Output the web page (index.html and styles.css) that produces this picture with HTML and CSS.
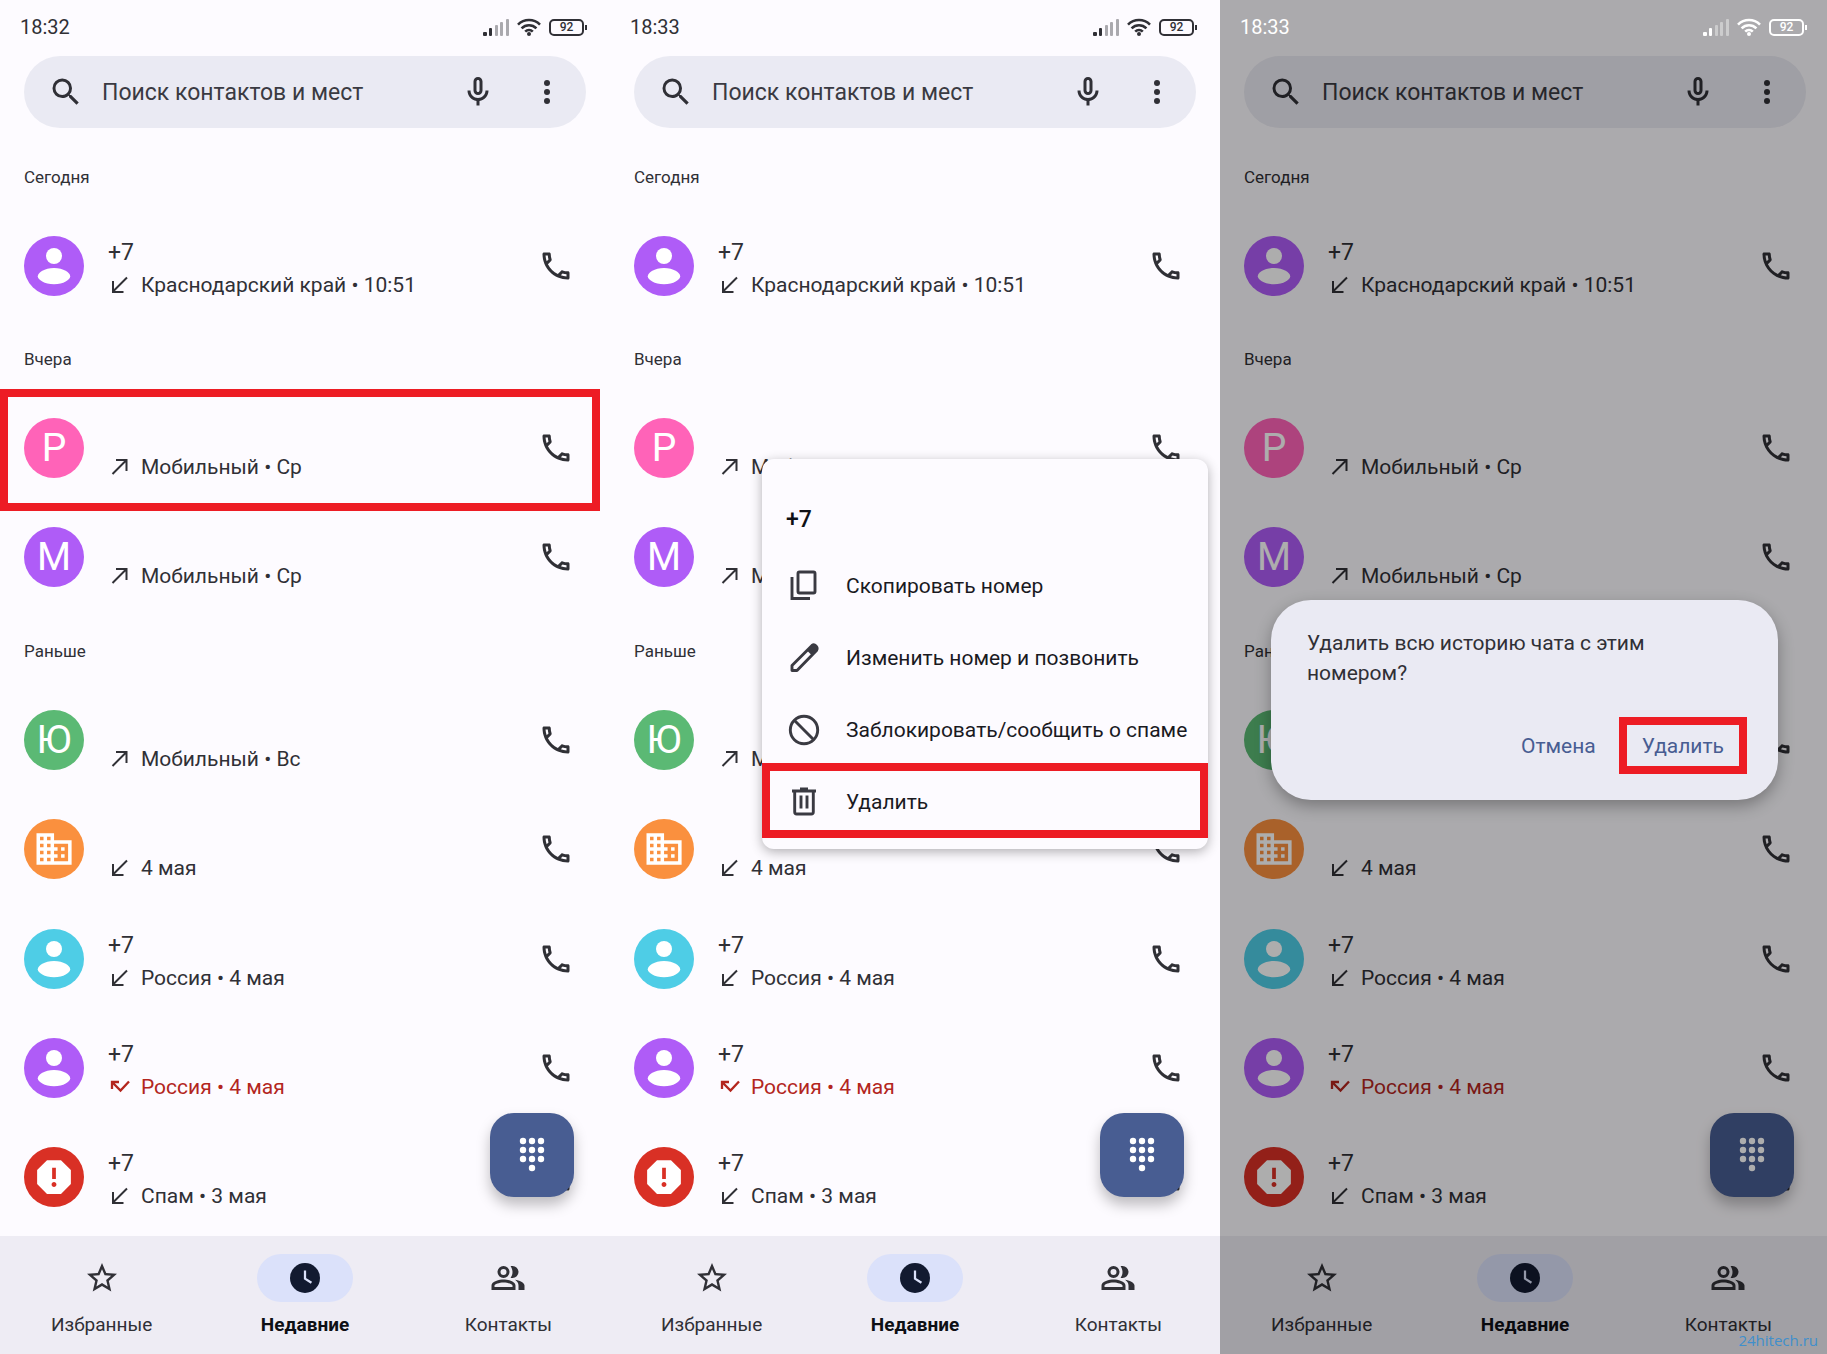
FILE: index.html
```
<!DOCTYPE html>
<html lang="ru">
<head>
  <meta charset="UTF-8" />
  <meta name="viewport" content="width=device-width, initial-scale=1.0"/>
  <title>Телефон - Недавние</title>
  <link rel="stylesheet" href="styles.css">
</head>
<body>

  <!-- ICONS -->
  <svg class="sprite" aria-hidden="true">
    <symbol id="i-signal" viewBox="0 0 26 17">
      <rect x="0" y="13" width="4" height="4" rx="1"/>
      <rect x="6" y="9" width="3" height="8" rx="1"/>
      <g opacity=".4"><rect x="12" y="6" width="3" height="11" rx="1"/><rect x="17" y="3" width="3" height="14" rx="1"/><rect x="23" y="0" width="3" height="17" rx="1"/></g>
    </symbol>
    <symbol id="i-wifi" viewBox="0 0 24 18">
      <g fill="none" stroke="currentColor" stroke-width="2.6"><path d="M1 6.6a15.600 15.600 0 0 1 22 0"/><path d="M4.600 10.300a10.500 10.500 0 0 1 14.800 0"/><path d="M8.200 13.700a5.400 5.400 0 0 1 7.600 0"/></g>
      <circle cx="12" cy="16" r="2"/>
    </symbol>
    <symbol id="i-search" viewBox="0 0 24 24"><path d="M15.500 14h-.79l-.28-.27A6.471 6.471 0 0 0 16 9.500 6.500 6.500 0 1 0 9.500 16c1.610 0 3.090-.59 4.230-1.570l.27.28v.79l5 4.990L20.490 19l-4.990-5zm-6 0C7.010 14 5 11.990 5 9.500S7.010 5 9.500 5 14 7.010 14 9.500 11.990 14 9.500 14z"/></symbol>
    <symbol id="i-mic" viewBox="0 0 24 24"><path d="M12 14c1.660 0 3-1.340 3-3V5c0-1.660-1.340-3-3-3S9 3.340 9 5v6c0 1.660 1.340 3 3 3zm-1-9c0-.55.45-1 1-1s1 .45 1 1v6c0 .55-.45 1-1 1s-1-.45-1-1V5zm6 6c0 2.760-2.240 5-5 5s-5-2.240-5-5H5c0 3.530 2.610 6.430 6 6.920V21h2v-3.080c3.390-.49 6-3.390 6-6.920h-2z"/></symbol>
    <symbol id="i-more" viewBox="0 0 24 24"><circle cx="12" cy="6" r="2"/><circle cx="12" cy="12" r="2"/><circle cx="12" cy="18" r="2"/></symbol>
    <symbol id="i-call" viewBox="0 0 24 24"><path d="M6.540 5c.06.89.21 1.760.45 2.590l-1.200 1.200c-.41-1.200-.67-2.470-.76-3.790h1.510m9.860 12.020c.85.24 1.720.39 2.600.45v1.490c-1.320-.09-2.590-.35-3.800-.75l1.200-1.190M7.500 3H4c-.55 0-1 .45-1 1 0 9.390 7.610 17 17 17 .55 0 1-.45 1-1v-3.490c0-.55-.45-1-1-1-1.240 0-2.450-.2-3.570-.57-.1-.04-.21-.05-.31-.05-.26 0-.51.1-.71.29l-2.200 2.200c-2.830-1.450-5.150-3.760-6.590-6.590l2.200-2.200c.28-.28.36-.67.25-1.020C8.700 6.450 8.500 5.250 8.500 4c0-.55-.45-1-1-1z"/></symbol>
    <symbol id="i-in" viewBox="0 0 24 24"><path fill="none" stroke="currentColor" stroke-width="2" d="M19 4.500L5 18.500M5 8v11H15.500"/></symbol>
    <symbol id="i-out" viewBox="0 0 24 24"><path fill="none" stroke="currentColor" stroke-width="2" d="M4.500 19L18.500 5M8 5h10.500v11"/></symbol>
    <symbol id="i-missed" viewBox="0 0 24 24"><path fill="none" stroke="currentColor" stroke-width="2.300" d="M4 14V7h7M4.500 7.500l8 8 8.500-9"/></symbol>
    <symbol id="i-person" viewBox="0 0 60 60"><circle cx="30" cy="20" r="8"/><path d="M30 32c9.500 0 16.200 4.600 16.200 8.200S39.500 48.200 30 48.200 13.800 43.800 13.800 40.200 20.500 32 30 32z"/></symbol>
    <symbol id="i-company" viewBox="-8 -8 40 40"><path d="M12 7V3H2v18h20V7H12zM6 19H4v-2h2v2zm0-4H4v-2h2v2zm0-4H4V9h2v2zm0-4H4V5h2v2zm4 12H8v-2h2v2zm0-4H8v-2h2v2zm0-4H8V9h2v2zm0-4H8V5h2v2zm10 12h-8v-2h2v-2h-2v-2h2v-2h-2V9h8v10zm-2-8h-2v2h2v-2zm0 4h-2v2h2v-2z" transform="translate(-2 -2) scale(1.170)"/></symbol>
    <symbol id="i-spam" viewBox="-4 -4 32 32"><path d="M15.730 3H8.270L3 8.270v7.460L8.270 21h7.460L21 15.730V8.270L15.730 3zM12 17.300c-.72 0-1.300-.58-1.300-1.300 0-.72.58-1.300 1.300-1.300.72 0 1.300.58 1.300 1.300 0 .72-.58 1.300-1.300 1.300zm1-4.300h-2V7h2v6z"/></symbol>
    <symbol id="i-dialpad" viewBox="0 0 26 36"><circle cx="4" cy="4" r="3.200"/><circle cx="13" cy="4" r="3.200"/><circle cx="22" cy="4" r="3.200"/><circle cx="4" cy="13" r="3.200"/><circle cx="13" cy="13" r="3.200"/><circle cx="22" cy="13" r="3.200"/><circle cx="4" cy="22" r="3.200"/><circle cx="13" cy="22" r="3.200"/><circle cx="22" cy="22" r="3.200"/><circle cx="13" cy="31" r="3.200"/></symbol>
    <symbol id="i-star" viewBox="0 0 24 24"><path d="M22 9.240l-7.190-.62L12 2 9.190 8.630 2 9.240l5.460 4.730L5.820 21 12 17.270 18.180 21l-1.630-7.030L22 9.240zM12 15.400l-3.760 2.270 1-4.280-3.320-2.880 4.380-.38L12 6.100l1.710 4.040 4.380.38-3.320 2.880 1 4.280L12 15.400z"/></symbol>
    <symbol id="i-clock" viewBox="0 0 24 24"><circle cx="12" cy="12" r="10"/><path class="hands" d="M12 7v5.400l4.300 2.800"/></symbol>
    <symbol id="i-people" viewBox="0 0 24 24"><path d="M9 12a4 4 0 1 0 0-8 4 4 0 0 0 0 8zm0-6a2 2 0 1 1 0 4 2 2 0 0 1 0-4zM9 13c-2.700 0-8 1.300-8 4v3h16v-3c0-2.700-5.300-4-8-4zm6 5H3v-1c0-.7 3.100-2 6-2s6 1.300 6 2v1zM13.700 4.100c.8 1 1.300 2.400 1.300 3.900s-.5 2.900-1.300 3.900c.4.1.9.1 1.300.1a4 4 0 0 0 0-8c-.4 0-.9 0-1.300.1zM16.700 13.100c1.400 1 2.300 2.200 2.300 3.900v3h4v-3c0-2.200-3.500-3.500-6.300-3.900z"/></symbol>
    <symbol id="i-copy" viewBox="0 0 36 36"><g fill="none" stroke="currentColor" stroke-width="2.900"><rect x="12" y="4" width="17" height="21" rx="1.500"/><path d="M6 9v21.500h18"/></g></symbol>
    <symbol id="i-edit" viewBox="0 0 36 36"><path fill="none" stroke="currentColor" stroke-width="2.900" stroke-linejoin="round" d="M6 30.500v-5L26 5.500q2-1.500 4 .5t.5 4.500L11 30.500z"/><path d="M21 10.500L26 5.500q2-1.500 4 .5t.5 4.500l-4.500 5z"/></symbol>
    <symbol id="i-block" viewBox="0 0 36 36"><g fill="none" stroke="currentColor" stroke-width="2.900"><circle cx="18" cy="18" r="13.700"/><path d="M8.300 8.300l19.400 19.400"/></g></symbol>
    <symbol id="i-trash" viewBox="0 0 36 36"><path d="M14 3.500h8v2h8v3H6v-3h8z"/><g fill="none" stroke="currentColor" stroke-width="2.900"><path d="M8.700 7v21q0 2 2 2h14.600q2 0 2-2V7M15 11.500v13M21 11.500v13"/></g></symbol>
  </svg>

  <main class="screens">

    <!-- SCREEN 1: CALL HISTORY -->
    <section class="phone">
      <div class="status">
        <span class="time">18:32</span>
        <svg class="signal"><use href="#i-signal"/></svg>
        <svg class="wifi"><use href="#i-wifi"/></svg>
        <span class="battery">92</span>
      </div>
      <form class="search">
        <svg class="icon"><use href="#i-search"/></svg>
        <input type="text" placeholder="Поиск контактов и мест" aria-label="Поиск контактов и мест" />
        <button type="button" aria-label="Голосовой поиск"><svg class="icon"><use href="#i-mic"/></svg></button>
        <button type="button" aria-label="Ещё"><svg class="icon"><use href="#i-more"/></svg></button>
      </form>
      <div class="calls">
        <h2>Сегодня</h2>
        <div class="call">
          <span class="avatar purple"><svg><use href="#i-person"/></svg></span>
          <div class="info"><p class="name">+7</p><p class="detail"><svg><use href="#i-in"/></svg>Краснодарский край • 10:51</p></div>
          <button aria-label="Позвонить"><svg class="icon"><use href="#i-call"/></svg></button>
        </div>
        <h2>Вчера</h2>
        <div class="call marked">
          <span class="avatar pink">P</span>
          <div class="info"><p class="name"></p><p class="detail"><svg><use href="#i-out"/></svg>Мобильный • Ср</p></div>
          <button aria-label="Позвонить"><svg class="icon"><use href="#i-call"/></svg></button>
        </div>
        <div class="call">
          <span class="avatar purple">M</span>
          <div class="info"><p class="name"></p><p class="detail"><svg><use href="#i-out"/></svg>Мобильный • Ср</p></div>
          <button aria-label="Позвонить"><svg class="icon"><use href="#i-call"/></svg></button>
        </div>
        <h2>Раньше</h2>
        <div class="call">
          <span class="avatar green">Ю</span>
          <div class="info"><p class="name"></p><p class="detail"><svg><use href="#i-out"/></svg>Мобильный • Вс</p></div>
          <button aria-label="Позвонить"><svg class="icon"><use href="#i-call"/></svg></button>
        </div>
        <div class="call">
          <span class="avatar orange"><svg><use href="#i-company"/></svg></span>
          <div class="info"><p class="name"></p><p class="detail"><svg><use href="#i-in"/></svg>4 мая</p></div>
          <button aria-label="Позвонить"><svg class="icon"><use href="#i-call"/></svg></button>
        </div>
        <div class="call">
          <span class="avatar cyan"><svg><use href="#i-person"/></svg></span>
          <div class="info"><p class="name">+7</p><p class="detail"><svg><use href="#i-in"/></svg>Россия • 4 мая</p></div>
          <button aria-label="Позвонить"><svg class="icon"><use href="#i-call"/></svg></button>
        </div>
        <div class="call">
          <span class="avatar purple"><svg><use href="#i-person"/></svg></span>
          <div class="info"><p class="name">+7</p><p class="detail missed"><svg><use href="#i-missed"/></svg>Россия • 4 мая</p></div>
          <button aria-label="Позвонить"><svg class="icon"><use href="#i-call"/></svg></button>
        </div>
        <div class="call">
          <span class="avatar red"><svg><use href="#i-spam"/></svg></span>
          <div class="info"><p class="name">+7</p><p class="detail"><svg><use href="#i-in"/></svg>Спам • 3 мая</p></div>
          <button aria-label="Позвонить"><svg class="icon"><use href="#i-call"/></svg></button>
        </div>
        <button class="fab" aria-label="Набрать номер"><svg><use href="#i-dialpad"/></svg></button>
      </div>
      <nav class="tabs">
        <a href="#"><span><svg class="icon"><use href="#i-star"/></svg></span>Избранные</a>
        <a href="#" class="active"><span><svg class="icon"><use href="#i-clock"/></svg></span>Недавние</a>
        <a href="#"><span><svg class="icon"><use href="#i-people"/></svg></span>Контакты</a>
      </nav>
    </section>

    <!-- SCREEN 2: CONTEXT MENU -->
    <section class="phone">
      <div class="status">
        <span class="time">18:33</span>
        <svg class="signal"><use href="#i-signal"/></svg>
        <svg class="wifi"><use href="#i-wifi"/></svg>
        <span class="battery">92</span>
      </div>
      <form class="search">
        <svg class="icon"><use href="#i-search"/></svg>
        <input type="text" placeholder="Поиск контактов и мест" aria-label="Поиск контактов и мест" />
        <button type="button" aria-label="Голосовой поиск"><svg class="icon"><use href="#i-mic"/></svg></button>
        <button type="button" aria-label="Ещё"><svg class="icon"><use href="#i-more"/></svg></button>
      </form>
      <div class="calls">
        <h2>Сегодня</h2>
        <div class="call">
          <span class="avatar purple"><svg><use href="#i-person"/></svg></span>
          <div class="info"><p class="name">+7</p><p class="detail"><svg><use href="#i-in"/></svg>Краснодарский край • 10:51</p></div>
          <button aria-label="Позвонить"><svg class="icon"><use href="#i-call"/></svg></button>
        </div>
        <h2>Вчера</h2>
        <div class="call">
          <span class="avatar pink">P</span>
          <div class="info"><p class="name"></p><p class="detail"><svg><use href="#i-out"/></svg>Мобильный • Ср</p></div>
          <button aria-label="Позвонить"><svg class="icon"><use href="#i-call"/></svg></button>
        </div>
        <div class="call">
          <span class="avatar purple">M</span>
          <div class="info"><p class="name"></p><p class="detail"><svg><use href="#i-out"/></svg>Мобильный • Ср</p></div>
          <button aria-label="Позвонить"><svg class="icon"><use href="#i-call"/></svg></button>
        </div>
        <h2>Раньше</h2>
        <div class="call">
          <span class="avatar green">Ю</span>
          <div class="info"><p class="name"></p><p class="detail"><svg><use href="#i-out"/></svg>Мобильный • Вс</p></div>
          <button aria-label="Позвонить"><svg class="icon"><use href="#i-call"/></svg></button>
        </div>
        <div class="call">
          <span class="avatar orange"><svg><use href="#i-company"/></svg></span>
          <div class="info"><p class="name"></p><p class="detail"><svg><use href="#i-in"/></svg>4 мая</p></div>
          <button aria-label="Позвонить"><svg class="icon"><use href="#i-call"/></svg></button>
        </div>
        <div class="call">
          <span class="avatar cyan"><svg><use href="#i-person"/></svg></span>
          <div class="info"><p class="name">+7</p><p class="detail"><svg><use href="#i-in"/></svg>Россия • 4 мая</p></div>
          <button aria-label="Позвонить"><svg class="icon"><use href="#i-call"/></svg></button>
        </div>
        <div class="call">
          <span class="avatar purple"><svg><use href="#i-person"/></svg></span>
          <div class="info"><p class="name">+7</p><p class="detail missed"><svg><use href="#i-missed"/></svg>Россия • 4 мая</p></div>
          <button aria-label="Позвонить"><svg class="icon"><use href="#i-call"/></svg></button>
        </div>
        <div class="call">
          <span class="avatar red"><svg><use href="#i-spam"/></svg></span>
          <div class="info"><p class="name">+7</p><p class="detail"><svg><use href="#i-in"/></svg>Спам • 3 мая</p></div>
          <button aria-label="Позвонить"><svg class="icon"><use href="#i-call"/></svg></button>
        </div>
        <button class="fab" aria-label="Набрать номер"><svg><use href="#i-dialpad"/></svg></button>
      </div>
      <nav class="tabs">
        <a href="#"><span><svg class="icon"><use href="#i-star"/></svg></span>Избранные</a>
        <a href="#" class="active"><span><svg class="icon"><use href="#i-clock"/></svg></span>Недавние</a>
        <a href="#"><span><svg class="icon"><use href="#i-people"/></svg></span>Контакты</a>
      </nav>
      <div class="menu">
        <h3>+7</h3>
        <button><svg class="icon"><use href="#i-copy"/></svg>Скопировать номер</button>
        <button><svg class="icon"><use href="#i-edit"/></svg>Изменить номер и позвонить</button>
        <button><svg class="icon"><use href="#i-block"/></svg>Заблокировать/сообщить о спаме</button>
        <button class="marked"><svg class="icon"><use href="#i-trash"/></svg>Удалить</button>
      </div>
    </section>

    <!-- SCREEN 3: DELETE DIALOG -->
    <section class="phone dimmed">
      <div class="status">
        <span class="time">18:33</span>
        <svg class="signal"><use href="#i-signal"/></svg>
        <svg class="wifi"><use href="#i-wifi"/></svg>
        <span class="battery">92</span>
      </div>
      <form class="search">
        <svg class="icon"><use href="#i-search"/></svg>
        <input type="text" placeholder="Поиск контактов и мест" aria-label="Поиск контактов и мест" />
        <button type="button" aria-label="Голосовой поиск"><svg class="icon"><use href="#i-mic"/></svg></button>
        <button type="button" aria-label="Ещё"><svg class="icon"><use href="#i-more"/></svg></button>
      </form>
      <div class="calls">
        <h2>Сегодня</h2>
        <div class="call">
          <span class="avatar purple"><svg><use href="#i-person"/></svg></span>
          <div class="info"><p class="name">+7</p><p class="detail"><svg><use href="#i-in"/></svg>Краснодарский край • 10:51</p></div>
          <button aria-label="Позвонить"><svg class="icon"><use href="#i-call"/></svg></button>
        </div>
        <h2>Вчера</h2>
        <div class="call">
          <span class="avatar pink">P</span>
          <div class="info"><p class="name"></p><p class="detail"><svg><use href="#i-out"/></svg>Мобильный • Ср</p></div>
          <button aria-label="Позвонить"><svg class="icon"><use href="#i-call"/></svg></button>
        </div>
        <div class="call">
          <span class="avatar purple">M</span>
          <div class="info"><p class="name"></p><p class="detail"><svg><use href="#i-out"/></svg>Мобильный • Ср</p></div>
          <button aria-label="Позвонить"><svg class="icon"><use href="#i-call"/></svg></button>
        </div>
        <h2>Раньше</h2>
        <div class="call">
          <span class="avatar green">Ю</span>
          <div class="info"><p class="name"></p><p class="detail"></p></div>
          <button aria-label="Позвонить"><svg class="icon"><use href="#i-call"/></svg></button>
        </div>
        <div class="call">
          <span class="avatar orange"><svg><use href="#i-company"/></svg></span>
          <div class="info"><p class="name"></p><p class="detail"><svg><use href="#i-in"/></svg>4 мая</p></div>
          <button aria-label="Позвонить"><svg class="icon"><use href="#i-call"/></svg></button>
        </div>
        <div class="call">
          <span class="avatar cyan"><svg><use href="#i-person"/></svg></span>
          <div class="info"><p class="name">+7</p><p class="detail"><svg><use href="#i-in"/></svg>Россия • 4 мая</p></div>
          <button aria-label="Позвонить"><svg class="icon"><use href="#i-call"/></svg></button>
        </div>
        <div class="call">
          <span class="avatar purple"><svg><use href="#i-person"/></svg></span>
          <div class="info"><p class="name">+7</p><p class="detail missed"><svg><use href="#i-missed"/></svg>Россия • 4 мая</p></div>
          <button aria-label="Позвонить"><svg class="icon"><use href="#i-call"/></svg></button>
        </div>
        <div class="call">
          <span class="avatar red"><svg><use href="#i-spam"/></svg></span>
          <div class="info"><p class="name">+7</p><p class="detail"><svg><use href="#i-in"/></svg>Спам • 3 мая</p></div>
          <button aria-label="Позвонить"><svg class="icon"><use href="#i-call"/></svg></button>
        </div>
        <button class="fab" aria-label="Набрать номер"><svg><use href="#i-dialpad"/></svg></button>
      </div>
      <nav class="tabs">
        <a href="#"><span><svg class="icon"><use href="#i-star"/></svg></span>Избранные</a>
        <a href="#" class="active"><span><svg class="icon"><use href="#i-clock"/></svg></span>Недавние</a>
        <a href="#"><span><svg class="icon"><use href="#i-people"/></svg></span>Контакты</a>
      </nav>
      <div class="scrim"></div>
      <div class="dialog" role="dialog">
        <p>Удалить всю историю чата с этим<br>номером?</p>
        <div class="actions">
          <button>Отмена</button>
          <button class="marked">Удалить</button>
        </div>
      </div>
      <a class="watermark" href="#">24hitech.ru</a>
    </section>

  </main>

</body>
</html>
```
FILE: styles.css
```
* {
  margin: 0;
  padding: 0;
  box-sizing: border-box;
}

body {
  font-family: Roboto, 'Open Sans', sans-serif;
  color: #303036;
  background: #fdfbff;
}

button {
  background: none;
  border: none;
  font: inherit;
  color: inherit;
  cursor: pointer;
}

a {
  color: inherit;
  text-decoration: none;
}

svg {
  display: block;
  flex-shrink: 0;
  fill: currentColor;
}

.sprite {
  position: absolute;
  width: 0;
  height: 0;
}

.icon {
  width: 36px;
  height: 36px;
}

.screens {
  display: grid;
  grid-template-columns: 610fr 610fr 607fr;
  min-height: 100vh;
}

.phone {
  position: relative;
  display: flex;
  flex-direction: column;
  overflow: hidden;
  background: #fdfbff;
}

/* Status bar */
.status {
  display: flex;
  align-items: center;
  gap: 8px;
  height: 56px;
  padding: 0 23px 2px 20px;
}

.time {
  flex: 1;
  font-size: 20px;
}

.signal {
  width: 26px;
  height: 17px;
}

.wifi {
  width: 24px;
  height: 18px;
}

.battery {
  position: relative;
  width: 35px;
  height: 17px;
  margin-right: 3px;
  border: 2px solid currentColor;
  border-radius: 5px;
  font-size: 12px;
  font-weight: 500;
  line-height: 13px;
  text-align: center;
}

.battery::after {
  content: "";
  position: absolute;
  top: 4px;
  right: -5px;
  width: 2px;
  height: 5px;
  background: currentColor;
}

/* Search */
.search {
  display: flex;
  align-items: center;
  height: 72px;
  margin: 0 24px;
  padding: 0 21px 0 24px;
  border-radius: 36px;
  background: #eaeaf3;
}

.search input {
  flex: 1;
  min-width: 0;
  padding-left: 18px;
  border: none;
  outline: none;
  background: none;
  font: inherit;
  font-size: 23px;
}

.search input::placeholder {
  color: #3a3a42;
  opacity: 1;
}

.search button + button {
  margin-left: 33px;
}

/* Calls */
.calls {
  position: relative;
  flex: 1;
  display: flex;
  flex-direction: column;
  padding: 10px 0 4px;
}

.calls h2 {
  padding: 29px 24px 24px;
  font-size: 17px;
  font-weight: 400;
  line-height: 20px;
}

.call {
  position: relative;
  flex: 1;
  display: flex;
  align-items: center;
  min-height: 80px;
  padding: 0 36px 0 24px;
}

.avatar {
  display: flex;
  align-items: center;
  justify-content: center;
  width: 60px;
  height: 60px;
  border-radius: 50%;
  color: #fff;
  font-size: 39px;
}

.avatar svg {
  width: 60px;
  height: 60px;
}

.purple { background: #af5cf7; }
.pink { background: #ff63b8; }
.green { background: #5bb974; }
.orange { background: #fa903e; }
.cyan { background: #4ecde6; }
.red { background: #d93025; }

.info {
  flex: 1;
  padding: 6px 0 0 24px;
}

.name {
  height: 32px;
  font-size: 23px;
  line-height: 32px;
}

.detail {
  display: flex;
  align-items: center;
  gap: 9px;
  height: 32px;
  font-size: 21px;
}

.detail svg {
  width: 24px;
  height: 24px;
}

.missed {
  color: #b3261e;
}

.call.marked::after {
  content: "";
  position: absolute;
  inset: -4px 10px -8px 0;
  border: 8px solid #ed1c24;
}

.fab {
  position: absolute;
  right: 36px;
  bottom: 39px;
  display: flex;
  align-items: center;
  justify-content: center;
  width: 84px;
  height: 84px;
  border-radius: 24px;
  background: #485d92;
  color: #fff;
  box-shadow: 0 8px 14px rgba(0, 0, 0, 0.25);
}

.fab svg {
  width: 26px;
  height: 36px;
}

/* Bottom tabs */
.tabs {
  display: grid;
  grid-template-columns: repeat(3, 1fr);
  height: 118px;
  padding-top: 18px;
  background: #eeecf4;
}

.tabs a {
  display: flex;
  flex-direction: column;
  align-items: center;
  gap: 10px;
  font-size: 19px;
  line-height: 26px;
}

.tabs span {
  display: flex;
  align-items: center;
  justify-content: center;
  width: 96px;
  height: 48px;
  border-radius: 24px;
}

.tabs .active {
  color: #0e1015;
  font-weight: 700;
}

.tabs .active span {
  background: #dbe1fa;
  color: #121a30;
}

.hands {
  fill: none;
  stroke: #dbe1fa;
  stroke-width: 1.5;
}

/* Context menu */
.menu {
  position: absolute;
  top: 459px;
  right: 12px;
  width: 446px;
  padding-bottom: 11px;
  border-radius: 12px;
  background: #fdfbff;
  box-shadow: 0 3px 12px rgba(0, 0, 0, 0.3);
}

.menu h3 {
  padding: 46px 24px 15px;
  font-size: 23px;
  font-weight: 500;
  line-height: 30px;
  color: #0e1015;
}

.menu button {
  position: relative;
  display: flex;
  align-items: center;
  gap: 24px;
  width: 100%;
  height: 72px;
  padding-left: 24px;
  font-size: 21px;
  color: #1a1a1f;
  white-space: nowrap;
}

.menu .icon {
  color: #3a3a42;
}

.menu .marked::after {
  content: "";
  position: absolute;
  inset: -3px 0 0;
  border: 8px solid #ed1c24;
}

/* Delete dialog */
.dimmed .search {
  margin-right: 21px;
}

.dimmed .status {
  position: relative;
  z-index: 2;
  padding-right: 20px;
  color: #fff;
}

.dimmed .call {
  padding-right: 33px;
}

.dimmed .fab {
  right: 33px;
}

.dimmed .tabs {
  margin-right: -3px;
}

.scrim {
  position: absolute;
  inset: 0;
  z-index: 1;
  background: rgba(0, 0, 0, 0.32);
}

.dialog {
  position: absolute;
  top: 600px;
  left: 51px;
  right: 49px;
  z-index: 2;
  padding: 28px 31px 26px 36px;
  border-radius: 40px;
  background: #eaeaf3;
  box-shadow: 0 6px 16px rgba(0, 0, 0, 0.3);
  font-size: 21px;
  line-height: 30px;
}

.actions {
  display: flex;
  justify-content: flex-end;
  align-items: center;
  gap: 23px;
  margin-top: 29px;
  color: #485d92;
}

.actions .marked {
  height: 57px;
  padding: 0 15px;
  border: 8px solid #ed1c24;
}

.watermark {
  position: absolute;
  right: 9px;
  bottom: 4px;
  z-index: 2;
  font-family: 'Open Sans', sans-serif;
  font-size: 15px;
  color: #3f8fcc;
}
```
